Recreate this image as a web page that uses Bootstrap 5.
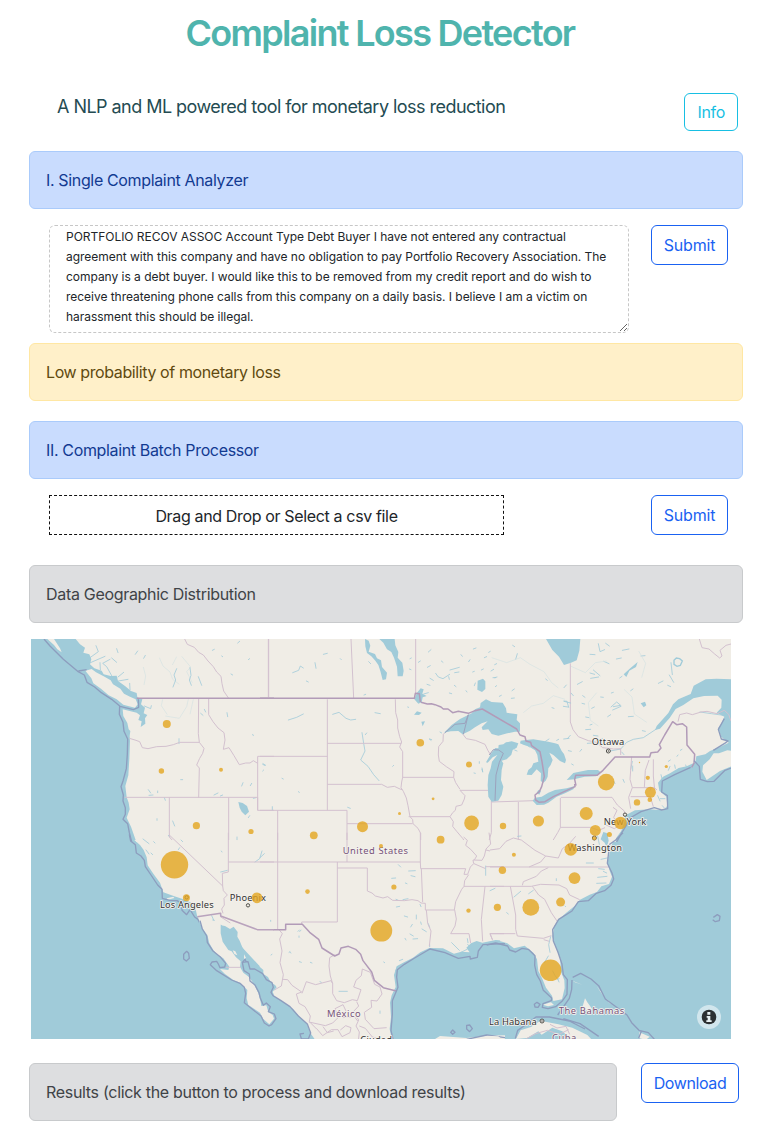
<!DOCTYPE html>
<html lang="en">
<head>
<meta charset="utf-8">
<meta name="viewport" content="width=device-width, initial-scale=1">
<title>Complaint Loss Detector</title>
<link href="https://cdn.jsdelivr.net/npm/bootstrap@5.3.0/dist/css/bootstrap.min.css" rel="stylesheet">
<style>
body{font-family:Inter,"Liberation Sans",sans-serif;color:#212529;background:#fff;letter-spacing:-.35px}
.page{width:714px;margin-left:29px}
.title{font-size:36px;font-weight:600;line-height:44px;color:#4fb4ad;letter-spacing:-1.7px;padding-top:11px;margin:0 12px 38px 0}
.intro{height:58px;padding:0 5px 0 28px}
.tagline{font-size:18px;line-height:27px;color:#244b52;letter-spacing:-.54px}
.btn{--bs-btn-border-radius:6px;letter-spacing:-.3px}
.tall{height:40px}
.submit{width:77px;--bs-btn-padding-x:0;letter-spacing:-.2px}
.download{width:98px;--bs-btn-padding-x:0;letter-spacing:-.4px}
.btn-outline-primary{--bs-btn-color:#1a62f2;--bs-btn-border-color:#1a62f2}
.btn-outline-info{--bs-btn-color:#17bfe3;--bs-btn-border-color:#17bfe3}
.alert{height:58px;border-radius:6px;white-space:nowrap}
.alert-primary{background:#c9dcfe;border-color:#aacbfb;color:#123a91}
.alert-warning{background:#fff0c9;border-color:#ffe7a3;color:#614a10;letter-spacing:-.4px}
.alert-secondary{background:#dddee0;border-color:#c8cacc;color:#404347;letter-spacing:-.31px}
.tools{padding:0 15px 0 20px}
.complaint{width:580px;height:108px;padding:1px 16px;border:1px dashed #c7c7c7;border-radius:6px;font-size:12px;line-height:20px;color:#212529;overflow:hidden;letter-spacing:-.03px;white-space:pre}
.drop{width:455px;height:40px;border:1px dashed #111;line-height:40px}
.map{display:block;width:700px;height:400px;margin-left:2px}
.water{fill:#a0cbd9}.land{fill:#f0ede6}
.river{fill:none;stroke:#a0cbd9;stroke-width:3;stroke-linejoin:round;stroke-linecap:round;stroke-opacity:.8}
.faint{fill:none;stroke:#d5e2e2;stroke-width:2}
.state{fill:none;stroke:#d3c1cf;stroke-width:3;stroke-linejoin:round}
.nation{fill:none;stroke:#b29bb8;stroke-width:4.5;stroke-linejoin:round}
.sea{fill:none;stroke:#8d9dbe;stroke-width:4;stroke-linejoin:round}
.dots{fill:#e3a51f;fill-opacity:.8}
.names{font-family:"Noto Sans",sans-serif;font-size:28px;letter-spacing:0;fill:#333;stroke:#f4f2ed;stroke-width:5;paint-order:stroke;stroke-linejoin:round}
.names .country{fill:#765179}
</style>
</head>
<body>
<main class="page">
<h1 class="title text-center">Complaint Loss Detector</h1>
<div class="intro d-flex justify-content-between align-items-start"><div class="tagline">A NLP and ML powered tool for monetary loss reduction</div><button class="btn btn-outline-info">Info</button></div>
<div class="alert alert-primary mb-3">I. Single Complaint Analyzer</div>
<div class="tools d-flex justify-content-between align-items-start" style="height:118px">
<textarea class="complaint">PORTFOLIO RECOV ASSOC Account Type Debt Buyer I have not entered any contractual
agreement with this company and have no obligation to pay Portfolio Recovery Association. The
company is a debt buyer. I would like this to be removed from my credit report and do wish to
receive threatening phone calls from this company on a daily basis. I believe I am a victim on
harassment this should be illegal.</textarea>
<button class="btn btn-outline-primary tall submit">Submit</button></div>
<div class="alert alert-warning" style="margin-bottom:20px">Low probability of monetary loss</div>
<div class="alert alert-primary mb-3">II. Complaint Batch Processor</div>
<div class="tools d-flex justify-content-between align-items-start" style="height:70px"><div class="drop text-center">Drag and Drop or Select a csv file</div><button class="btn btn-outline-primary tall submit">Submit</button></div>
<div class="alert alert-secondary mb-3">Data Geographic Distribution</div>

<svg class="map mb-4" viewBox="0 0 2100 1200" role="img" aria-label="Map of complaints by state">
<rect class="water" width="2100" height="1200"/>
<!-- Pacific Northwest -->
<g transform="translate(-3 -9)">
<path class="land" d="M137 9L150 25 165 35 160 50 178 55 184 70 180 85 193 97 215 104 221 115 242 120 260 119 264 135 285 150 303 165 320 171 322 184 337 190 333 205 345 215 341 232 352 237 345 247 346 263 332 273 335 256 325 252 330 238 320 230 278 220 280 240 292 261 296 280 301 285 299 300 300 315 298 370 295 418 286 450 290 484 296 500 299 520 290 545 303 572 318 615V618H735V9ZM166 104L185 99 198 109 221 121 242 133 249 145 271 158 282 173 300 182 317 190 323 205 315 215 297 211 280 206 260 190 236 178 213 158 190 142 184 127ZM52 9H72L90 37 95 49 82 40 72 27Z"/>
<path class="river" d="M180 65L205 47 198 29M179 81L225 61M211 101L210 80M245 119L230 92 218 82 240 70M264 123L281 109M265 135L294 130M300 161L299 142M343 210L362 218 364 209M345 240L336 265"/>
<path class="faint" d="M340 93L347 120 342 147M388 65L399 90 420 108 428 130 448 145M455 61L482 93 470 107 487 140M440 62l-13 25M398 190l-4 19 18 27M475 190l-5 22-22 35-42-7M490 190l-10 45"/>
<path class="river" d="M260 38l4 12M245 66l15 13M323 45l-7 10M346 58l-5 9M440 98l-8 19 5 15-8 21M480 95l3 23-5 14 6 16M505 122l10 26M547 43l6-3M575 60l3 2M623 21l6-5M655 71l4-3M603 114l5 3M523 220l4 8M512 232l7 6M591 230l2 12M668 295l2 4M447 308v15M452 431h6M355 461l7 10M357 478l12-1M403 485l3 8M383 465v5M428 555l6 15M415 598l4 5M381 548v5M552 477l12-6M571 480l7-3M635 450l4-10M661 449l4-7M699 383l8 5M698 405l3-3M655 545l4-6M670 487l8-2"/>
<path class="water" d="M625 498L638 501 651 510 657 527 646 538 635 527 629 515Z"/>
<path class="state" d="M464 9L472 25 493 34 506 49 520 57 534 75 550 92 560 108 573 121 576 143 581 165 596 187M716 9V187M506 187L505 293 508 319H449L430 326 408 331 380 332 354 338 337 335 329 317 315 312 298 307M508 319L522 337 518 352 509 367 500 387 508 396 506 485M284 484H683V523H735M683 523V361H735M536 187V236L549 257 564 276 582 290 585 312 580 340 597 335 612 359 628 386 647 381 660 381 670 374 683 382M418 484V603L432 618M596 484V618"/>
<path class="nation" d="M320 187H735"/>
<path class="sea" d="M42 9L60 30 100 70 143 106 163 117 171 139 194 153 214 170 245 190 270 211 310 221 326 214 325 190M269 211L268 235 279 259 282 286 293 309 292 354 289 398 279 435 273 452 280 477 279 495 286 515 286 535 279 550 293 563 298 590 305 618M145 105l25-4"/>
</g>
<!-- Northern plains -->
<g transform="translate(687 -9)">
<path class="land" d="M42 9H735V618H42Z"/>
<path class="water" d="M358 9H404L406 28 415 48 413 65 427 80 431 105 428 121 413 121 411 92 402 65 394 48 381 40 370 20ZM315 9L326 14 331 29 326 47 345 54 351 67 363 73 366 93 381 110 378 130 368 132 361 105 355 87 346 74 334 61 321 51 316 31ZM653 134L669 128 676 136 676 159 666 168 652 161Z"/>
<path class="water" d="M463 190L471 170 482 157 491 160 487 173 500 180 488 184 485 199 475 203ZM462 236L471 226 485 230 477 237ZM484 257L495 256 488 271Z"/>
<path class="river" d="M190 55l12-3M98 110l18-7 5-13 9 6M165 80l3 17M139 135l6 3M241 68l3 3M326 77l6 6M85 252l25-8 20-10M218 235l19-6 21 18 14 5 15-2M306 290l5 32 4 23-13 27 22 19 17 25 16 18M320 291l-4 5M345 230l16 3M8 385l6 3M66 427l4 2M115 467l3 2M37 512v11M263 514l8 3M398 391l3-3M509 309l6 2M443 213l3 1M540 288l5 3M658 377v5M666 400l2 8M642 411l4 1M312 177l5-2"/>
<path class="river" d="M505 48l8-7M475 79l6-4M502 94l9-5M527 112l8 11 14 5 20-13M570 102l28-8M584 110l13-2M510 127l10 6M501 145l9 3M491 174l14-4M544 75l5 4M566 122l2 8M568 171l7 2M583 148l5 4M603 56l4 5M626 77l4-6M638 108l5-2M673 65l7-3M664 102l6-3M646 141l-3 8M640 39l8-3M686 49l5-3M704 86l6-3M704 125l7-2M706 152l4-3M618 164l3 4M450 68l4-2M448 99l5 2"/>
<path class="state" d="M25 9V187M273 9L281 187M467 9V175M202 190V523M202 322H424M0 361H202M202 445H365M365 445L382 454 403 451 420 459 427 461M0 523H261V618M261 563H458M53 523V618M406 190L407 230 413 252 413 276 419 302 425 318 419 333 428 347V424L425 438 423 455 430 466 439 486 444 509 450 542 458 551 459 563 474 577 482 592V618M427 424H581L582 407 559 392 538 376 535 357 536 332 549 316 550 295 555 290M446 542H570L578 530 586 523 588 511 605 507 613 489 615 479 600 463H706M581 424L587 440 600 460M570 542L580 557 578 571 590 586 608 607 615 618M694 495V590L686 618M609 295L619 308 646 313 675 325 684 344 694 360"/>
<path class="nation" d="M0 187H463L466 172 478 173 481 198"/>
</g>
<!-- Eastern Canada and New England -->
<g transform="translate(1377 -9)">
<path class="land" d="M42 9H735V130L680 128 647 130 611 149 602 174 565 190 549 205 535 231 500 270 495 282 510 278 539 246 557 219 580 207 610 187 642 180 683 179 695 191 694 215 680 230 703 242 694 263 685 275 693 302 716 320 685 335 660 345 646 355 619 361 616 379 590 391 566 396 540 412 519 422 504 440 508 464 529 482 532 509 520 523 480 520 435 523 408 537 403 554 394 584 378 607 377 618H42ZM735 345L712 343 687 352 671 352 659 370 639 388 637 407 650 432 690 405 735 387Z"/>
<path class="water" d="M168 9H271L268 44 260 73 243 80 222 87 207 62 187 42ZM230 432L250 411 294 402 324 402 332 409 318 421 284 422 253 430Z"/>
<path class="water" d="M401 115L419 98 443 78 438 93 418 104 409 123ZM452 202L465 197 469 208 461 214Z"/>
<path d="M552 73l7-7 10 2 8 7-6 13-10 3-9-6Z" fill="none" stroke="#a0cbd9" stroke-width="4"/>
<path class="river" d="M350 347L392 339 410 319 430 310 460 305 499 279M630 228l34 5 37 5M395 348l7 8M325 23l5 24 14-6M347 22l11 8M300 55l15 1M341 76l16 7M397 43l20-4M379 69l15-3M453 60l12-1M543 80l4 36M538 117l13 22M505 142l14-7M533 148l9 4M310 102l20 17M300 111l14 4M302 127l24-4M262 145l15-8M222 155l7-8M222 195l9 1 5 18M243 171l7 8M220 211l14 2M167 129l5 4M186 215l6 2M82 53l-5 17M68 28l6 4M11 100l-8 5M9 125l8 0M66 164l7-5M64 187l9-1M34 178l-6 3M363 213l17-15 12 10-22 4M368 222l25-11M305 217l8-4M287 243l10 2M353 242l9-6M415 242l15-1M429 159l-7 5M364 171l6-2M340 184l-8-1M396 121l-7 5M278 179l7 5M276 202l8 2M457 284l9 2M300 267l6-2M287 281l15-1M310 298l14 2M320 313l17-5M241 298l-8 9M206 310l-6 3M165 317l12-8M275 340l-5 6M292 322l14-1M427 376l-5 24M428 390v15M541 372l-6 4M564 357l-3 4M576 340l-5 3M591 397l-4-10M556 397l-2-10M535 403l5-12M516 428l-3-12M371 436l4 7M399 430l4 9M484 455l-3 7M503 479l7 16M511 488h14M517 509l6 7"/>
<path class="faint" d="M5 65L50 80 91 65 120 85 162 107 185 140 205 156M100 230L125 210 160 202 190 179 225 190M241 90l45 20 30-30 34-5M320 170l-25 30 6 53 24 17M402 160l24 23 7 51 37 25M446 45l21 37-12 43"/>
<path class="state" d="M241 82V258L249 281 265 302 295 314 320 319 338 335 371 339 392 338V357M628 9L636 35 657 39 674 54 689 66 696 60 690 43 708 28 723 24M564 257L569 236 590 231 607 236 633 228 651 226 681 233 703 223 716 235 723 255M5 498L132 494M85 498V618M212 484H366L382 507 403 525 404 540M211 486V575L203 590 186 618M211 574H302L326 583 345 575M369 514L381 523 371 544 386 569 373 578 348 567M425 362L420 430 427 455 416 484 422 518M427 455H493L501 462M422 482H481L490 512M494 462L490 420 490 370M463 455L466 403 477 372"/>
<path class="nation" d="M258 449L254 430 257 418H321L339 403 375 363H479L483 350 503 348 513 336 508 326 524 297 548 257 560 266 577 263 590 273 591 327 614 355 612 382 605 394"/>
<path class="sea" d="M612 374L628 391 631 430 652 437 672 436 705 403 735 392M670 343L704 322 714 315 694 309 685 280 703 248M602 394L554 416 517 435 515 468 532 479 533 518 515 522 493 515 453 527 420 546 408 570 394 592 380 618"/>
</g>
<!-- Great Lakes -->
<g transform="translate(1167 123)">
<path class="water" d="M72 158L95 135 120 117 155 100 165 88 180 82 182 69 198 58 215 66 248 68 258 85 260 98 292 103 290 120 300 130V155L285 155 262 160 235 167 215 162 205 148 188 150 185 142 203 124 185 130 165 142 150 152 128 163 115 153 92 154ZM198 247L215 218 226 204 235 205 236 195 250 193 258 187 275 184 295 190 290 203 278 210 274 224 260 238 245 242 250 250 245 270 243 300 250 320 245 345 235 362 215 365 205 350 203 315 205 285 212 265 216 245 232 225 218 232 203 248ZM318 180L340 178 385 185 405 190 415 193 425 213 432 222 438 240 435 250 420 243 400 225 388 218 398 240 392 255 385 265 383 290 377 302 370 308 362 303 363 280 350 268 335 285 320 284 325 270 335 262 340 250 355 245 352 225 345 211 328 200 310 194 300 190 302 182ZM338 362L345 353 365 350 385 338 405 330 440 325 465 318 460 328 435 340 410 350 385 368 372 374 350 375ZM355 330l8 2-5 12-8-6Z"/>
<path class="river" d="M186 264l2 10M28 177l5 4M445 212l9 2M455 252l5 3M432 64l20 5M447 175l-16 2M284 210l7 3M320 193l8 8"/>
<path class="state" style="stroke:#9ca2bd" d="M75 158L105 133 135 130 145 104 130 163M208 225L220 209 236 210 250 220 238 247 228 285 225 362"/>
<path class="nation" d="M3 67L22 72 34 71 45 74 63 81 70 87 84 87 98 98 115 94 145 100 165 92 187 87 290 147 300 165 315 170 318 183 332 187 335 197 360 215 366 245 373 290 365 320 358 335 345 345 347 360 358 367 375 365 400 350 465 320 464 312"/>
</g>
<!-- California and Arizona -->
<g transform="translate(-3 591)">
<path class="land" d="M313 12L330 27 341 42 350 64 353 88 370 113 390 140 400 169 433 181 456 188 481 199 496 215 502 242 516 254 516 278 530 300 572 265 735 440V12Z"/>
<path class="river" d="M339 9l18 14M348 42l9 12M371 17l4 4M363 51l5 5M453 12l5 5M445 41l4-6M572 108l20-5M621 3v8M675 78l14-10 7-23M574 45l2 3"/>
<path class="land" d="M410 187l20-5 3 4-19 5Z"/>
<path class="state" d="M418-3L578 150 577 112 595 108V-10M595 78H735M578 150L580 164 592 177 582 187 583 207 575 219 579 232"/>
<path class="sea" d="M298-5L302 15 316 26 319 51 333 60 343 73 346 92 363 117 383 147 396 160 397 187 419 193 441 194 455 202 456 223 470 236 480 221 494 243 504 250 510 262M470 346l-9 9v14l8 6 9-8-2-15ZM544 489l-6 7 6 6 7-6Z"/>
</g>
<!-- Texas, the Gulf and Mexico -->
<g transform="translate(687 591)">
<path class="land" d="M42 12H735V314L707 312 667 320 650 315 633 322 619 335 629 349 604 347 582 353 549 337 508 336 481 349 459 365 432 379 410 391 402 417 407 453 395 478 390 500 393 543 389 579 397 618H170L149 588 140 563 118 542 99 519 60 493 43 483 36 461 48 450 34 447 14 420-10 400 42 350ZM510 618L540 600 620 606 680 599 735 598V618Z"/>
<path class="river" d="M0 65l13-12M415 86l7 7M446 105l20-1M453 119l12 3M436 141l5 2M395 127l12-1M408 190l7 3M429 191l15-3M480 205l3 7M409 213l10-2M433 240l10 3M469 237v12M482 258l2 7M457 265l-5 8M486 279l13 8M450 294l10 6M459 309l14-1M435 307l3 5M371 378l3 2M418 374l10-4M407 404l5-10M118 377l6 2M237 466l25 0M114 286l4-4M87 349l3-2M360 525v7M677 90v28M505 263l4 11M509 326v6M575 320l23 23M603 349l18-9M623 325l12 14M622 308l2 12M180 437l4 2"/>
<path class="state" d="M0 78H481V-10M53-10V281M261-10V78M232 78V258H125V266M232 96H322V165L336 171 346 180 369 186 383 182 398 193 433 194 456 191 474 194 483 201 496 202V222H583M481 78L482 98H617L612 115 623 115 631 93 641 83 639 72 666 73 673 60 678 39 692 24 687-10M484 98L488 198M499 222L503 262 513 285 508 330M583 222L587 197 605 160 612 151 614 134 626 116M612 151H735M572 293L585 270 589 249 584 222M572 293H627L632 321M675 151L664 250 668 316M690 45L678 42M677 92H735M642 83L677 98M690 293H735M690 293L697 310M611 3L622 13 617 28 632 40 650 60 643 72"/>
<path class="state" d="M57 281L67 293 59 309 66 345 60 380 70 416 64 450 43 462M69 430L83 431 96 448 125 468 109 474 117 502 135 512 151 540 148 557 170 579M126 472L139 437 167 446 213 434 218 443 211 420 207 390 209 365 224 356M218 443L218 473 230 494 253 500 277 491 292 494 303 461 281 453 288 433 304 419 307 399 331 409 344 445 360 453 366 474 351 495 333 493 335 514 313 529 316 550 342 578 380 575M290 497L296 510 280 527 296 552 288 570 298 588 295 615M147 558L196 569 218 561 234 545 225 518 249 506 258 525 248 545 283 542 293 555M170 578L188 599 214 581 234 581 246 602 270 590 273 575 257 569 241 582M189 572L202 590 221 585M298 570L316 577 337 603 371 613"/>
<path class="nation" d="M40 281H77V265H127L149 289 176 310 186 336 224 360 237 354 243 336 265 331 287 340 302 355 309 374 335 408 343 433 370 455 409 465"/>
<path class="sea" d="M735 323L669 326 655 345 652 364 631 369 630 361 595 367 555 350 510 339 464 366 433 385 412 401 410 423 414 454 397 494 397 535 393 583 400 615M578 582l-6 7 6 6 7-6ZM620 568v11l9 8 8-9-8-11ZM620 610l60-13 55 8"/>
</g>
<!-- Baja California and the Gulf of California -->
<g transform="translate(507 783)">
<path class="water" d="M-3 60L62 76 75 78 90 87 101 80 113 96 112 110 119 122 127 142 139 163 135 178 148 185 162 185 190 210 190 222 204 231 212 247 225 255 230 262 218 275 223 291 240 301 279 327 298 350 320 371 329 396 340 420H-3Z"/>
<path class="land" d="M-5 40H65L62 78 62 100 68 125 85 150 95 154 108 172 122 184 120 201 130 218 148 232 163 255 175 280 182 305 184 318 199 316 205 336 218 345 222 356 208 373 190 357 180 338 160 325 145 315 140 295 142 270 120 248 100 240 75 222 60 207 85 210 88 200 70 175 50 162 40 150 28 130 22 105 5 82-5 55ZM98 151l8 3 6 12-9-4ZM132 163l6 10-6 4Z"/>
<path class="river" d="M35 47l6 13M38 60l5 1M299 94l4-3M297 108v4M212 61v3M270 157l3 2M331 187l5 2M213 165l3-2"/>
<path class="state" d="M78 202H123M61 50L91 69"/>
<path class="nation" style="stroke:#b9a3bd" d="M-8 50L62 40 62 48 172 89H222"/>
<path class="sea" d="M0 62L7 87 20 108 22 127 38 152 62 172 77 190 74 201 60 203 55 192 50 184 36 186 31 194 50 212 95 240 120 250 133 262 137 280 133 308 160 330 183 348 193 369 207 378 215 374 228 356 223 342 205 335 211 320 199 309 190 316 181 294 177 278 165 255 150 243 148 222 132 212 127 187 144 185 150 207 164 207 188 221 199 239 216 248 220 262 213 277 219 287 242 301 270 320 295 348 322 372 332 399 325 417 304 416 300 402 312 400M127 187L135 178 139 186"/>
</g>
<!-- Southeast, Florida and the Caribbean -->
<g transform="translate(1377 591)">
<path class="land" d="M42 12H370L361 41 352 82 360 107 366 122 357 144 334 151 321 168 299 176 270 191 253 211 228 231 204 252 193 270 187 302 198 336 211 368 212 405 223 433 224 456 216 490 190 495 186 479 168 455 157 428 145 405 141 370 130 350 104 329 72 337 52 322 29 315 42 300Z"/>
<path class="land" d="M78 609L92 583 123 573 151 554 205 565 247 575 292 597 309 615H251L217 586 187 575 155 596 145 586 111 606ZM-10 599L25 601 40 613H-10ZM285 487L278 511 291 525 307 520 292 499ZM247 434L277 446 255 439ZM320 451L334 468 342 482 332 468ZM350 489L364 503 357 500ZM448 589L479 602 467 612 447 606ZM158 506L183 499 192 507 174 511Z"/>
<path class="water" d="M332 10L340-12 352-8 356 14 350 34 344 20Z"/>
<path class="river" d="M340 106l10 5M323 124l28-3M320 142l28-1M343 100l-17-2M333 70l23-5M289 81l21 0M199 128v6M225 210l2 2M182 302l-6 24 4 23M188 405l6 12 10 14 3 7M163 380l12-20M72 183l20-17M116 173l14-10M0 164l15-7M50 230l5 4M83 1l10-1M328 25l-5-25M202 430l5-2M148 427l8 8"/>
<path class="state" d="M0 42L29 38 48 16 70 6 94 12 135 43 167 60 152 78 117 93M167 60L205 66 217 38 237 24 257 1M0 93H356M0 151H124L152 145 207 147 230 158 239 177 269 191M127 151L146 177 164 190 184 230 201 255M61 151L77 237V280L82 300 160 307 184 299M0 293H76M97 148L100 137 139 121 154 105 175 95M0 293L8 313M161 311l17 5"/>
<path class="state" d="M180 565l21 11 27-5 11 24M109 608l28-15 35-10 35 12 29-14"/>
<path class="sea" d="M399-10L377 12 359 25 352 82 366 111 371 129 363 148 344 164 319 172 295 194 265 197 246 225 206 250 188 281 190 315 204 349 216 385 220 416 232 431 231 475 216 496 197 512 174 518 157 514 159 503 184 494 185 486 160 463 151 435 140 415 134 388 135 359 115 340 96 337 77 348 59 342 53 330 17 321-10 327M248 424L272 412 303 429 326 449 346 489 383 516 411 537 425 560 447 583 475 590 495 612M246 432L245 460 238 487 203 537M220 548L270 563 326 601M76 607L83 583 106 567 138 543 178 543 238 555 285 579M133 505l8-6 9 6-6 9-9-1ZM670 244l12-8 8 5-2 13-12 3-8-6M446 607l8-21"/>
</g>
<g class="names">
<g fill="#f0ede6" stroke="#52524c" stroke-width="3" style="paint-order:normal"><circle cx="1732" cy="336" r="6"/><circle cx="1782" cy="527" r="5"/><circle cx="1690" cy="597" r="6"/><circle cx="651" cy="799" r="5"/><circle cx="467" cy="775" r="5"/><circle cx="1533" cy="1146" r="6"/></g>
<circle cx="1732" cy="336" r="2" fill="#444" stroke="none"/><circle cx="1533" cy="1146" r="2" fill="#444" stroke="none"/>
<text x="1682" y="319" textLength="98">Ottawa</text><text x="1718" y="557" textLength="128">New York</text><text x="1610" y="635" textLength="163">Washington</text><text x="387" y="808" textLength="161">Los Angeles</text><text x="596" y="787" textLength="109">Phoenix</text><text x="1374" y="1157" textLength="143">La Habana</text><text x="988" y="1211" textLength="95">Ciudad</text>
<g class="country"><text x="935" y="646" textLength="196">United States</text><text x="888" y="1133" textLength="101">México</text><text x="1583" y="1124" textLength="197">The Bahamas</text><text x="1563" y="1207" textLength="73">Cuba</text></g>
</g>
<g class="dots" transform="scale(3) translate(-31 -639)">
<circle cx="166.8" cy="724" r="4"/><circle cx="161.4" cy="771" r="2.7"/><circle cx="221" cy="769.7" r="2"/><circle cx="196.4" cy="825.7" r="3.6"/><circle cx="251" cy="831.5" r="2.6"/><circle cx="174.5" cy="864.7" r="13.7"/><circle cx="186.4" cy="897.7" r="3.5"/><circle cx="257" cy="897.8" r="5.4"/><circle cx="307.5" cy="891.6" r="2.3"/><circle cx="313.8" cy="835.3" r="3.9"/><circle cx="362.5" cy="826.7" r="5.5"/><circle cx="381" cy="846" r="2"/><circle cx="399.5" cy="813.5" r="1.5"/><circle cx="420.3" cy="742.8" r="3.8"/><circle cx="469" cy="764.6" r="3"/><circle cx="433.1" cy="798.8" r="1.4"/><circle cx="471.6" cy="823" r="7.4"/><circle cx="440.6" cy="839.7" r="3.9"/><circle cx="503" cy="826" r="3.2"/><circle cx="538.4" cy="821" r="5.6"/><circle cx="606.2" cy="782.1" r="8.3"/><circle cx="586.2" cy="813.5" r="6.5"/><circle cx="595.3" cy="830.4" r="5.5"/><circle cx="620.5" cy="823" r="6.2"/><circle cx="609.4" cy="834.6" r="2.5"/><circle cx="650.4" cy="792.3" r="5.5"/><circle cx="649.8" cy="799.8" r="2.3"/><circle cx="637" cy="802.4" r="3.2"/><circle cx="647.8" cy="777.8" r="2.1"/><circle cx="666.3" cy="766.5" r="1.6"/><circle cx="639.5" cy="762.5" r=".7"/><circle cx="570.8" cy="849.4" r="6.3"/><circle cx="574.5" cy="878.1" r="5.9"/><circle cx="560.6" cy="902.1" r="4.5"/><circle cx="530.8" cy="907.4" r="8.4"/><circle cx="502.4" cy="870.3" r="3.7"/><circle cx="513.9" cy="854.8" r="2"/><circle cx="497.4" cy="907.3" r="3.6"/><circle cx="468.5" cy="910.6" r="2.2"/><circle cx="393.9" cy="887" r="2.6"/><circle cx="381.3" cy="930.7" r="10.9"/><circle cx="550.6" cy="970.3" r="10.8"/><circle cx="594.3" cy="838.2" r="2"/>
</g>
<circle cx="2034" cy="1134" r="36" fill="#fff" fill-opacity=".52"/><circle cx="2034" cy="1134" r="22" fill="#2c3032"/><path d="M2029 1119h9v8h-9ZM2027 1131h11v13h4v5h-16v-5h4v-8h-3Z" fill="#e8f1f3"/>
</svg>
<div class="d-flex align-items-start gap-4"><div class="alert alert-secondary mb-0" style="width:588px">Results (click the button to process and download results)</div><button class="btn btn-outline-primary tall download">Download</button></div>
</main>
<script src="https://cdn.jsdelivr.net/npm/bootstrap@5.3.0/dist/js/bootstrap.bundle.min.js"></script>
</body>
</html>
